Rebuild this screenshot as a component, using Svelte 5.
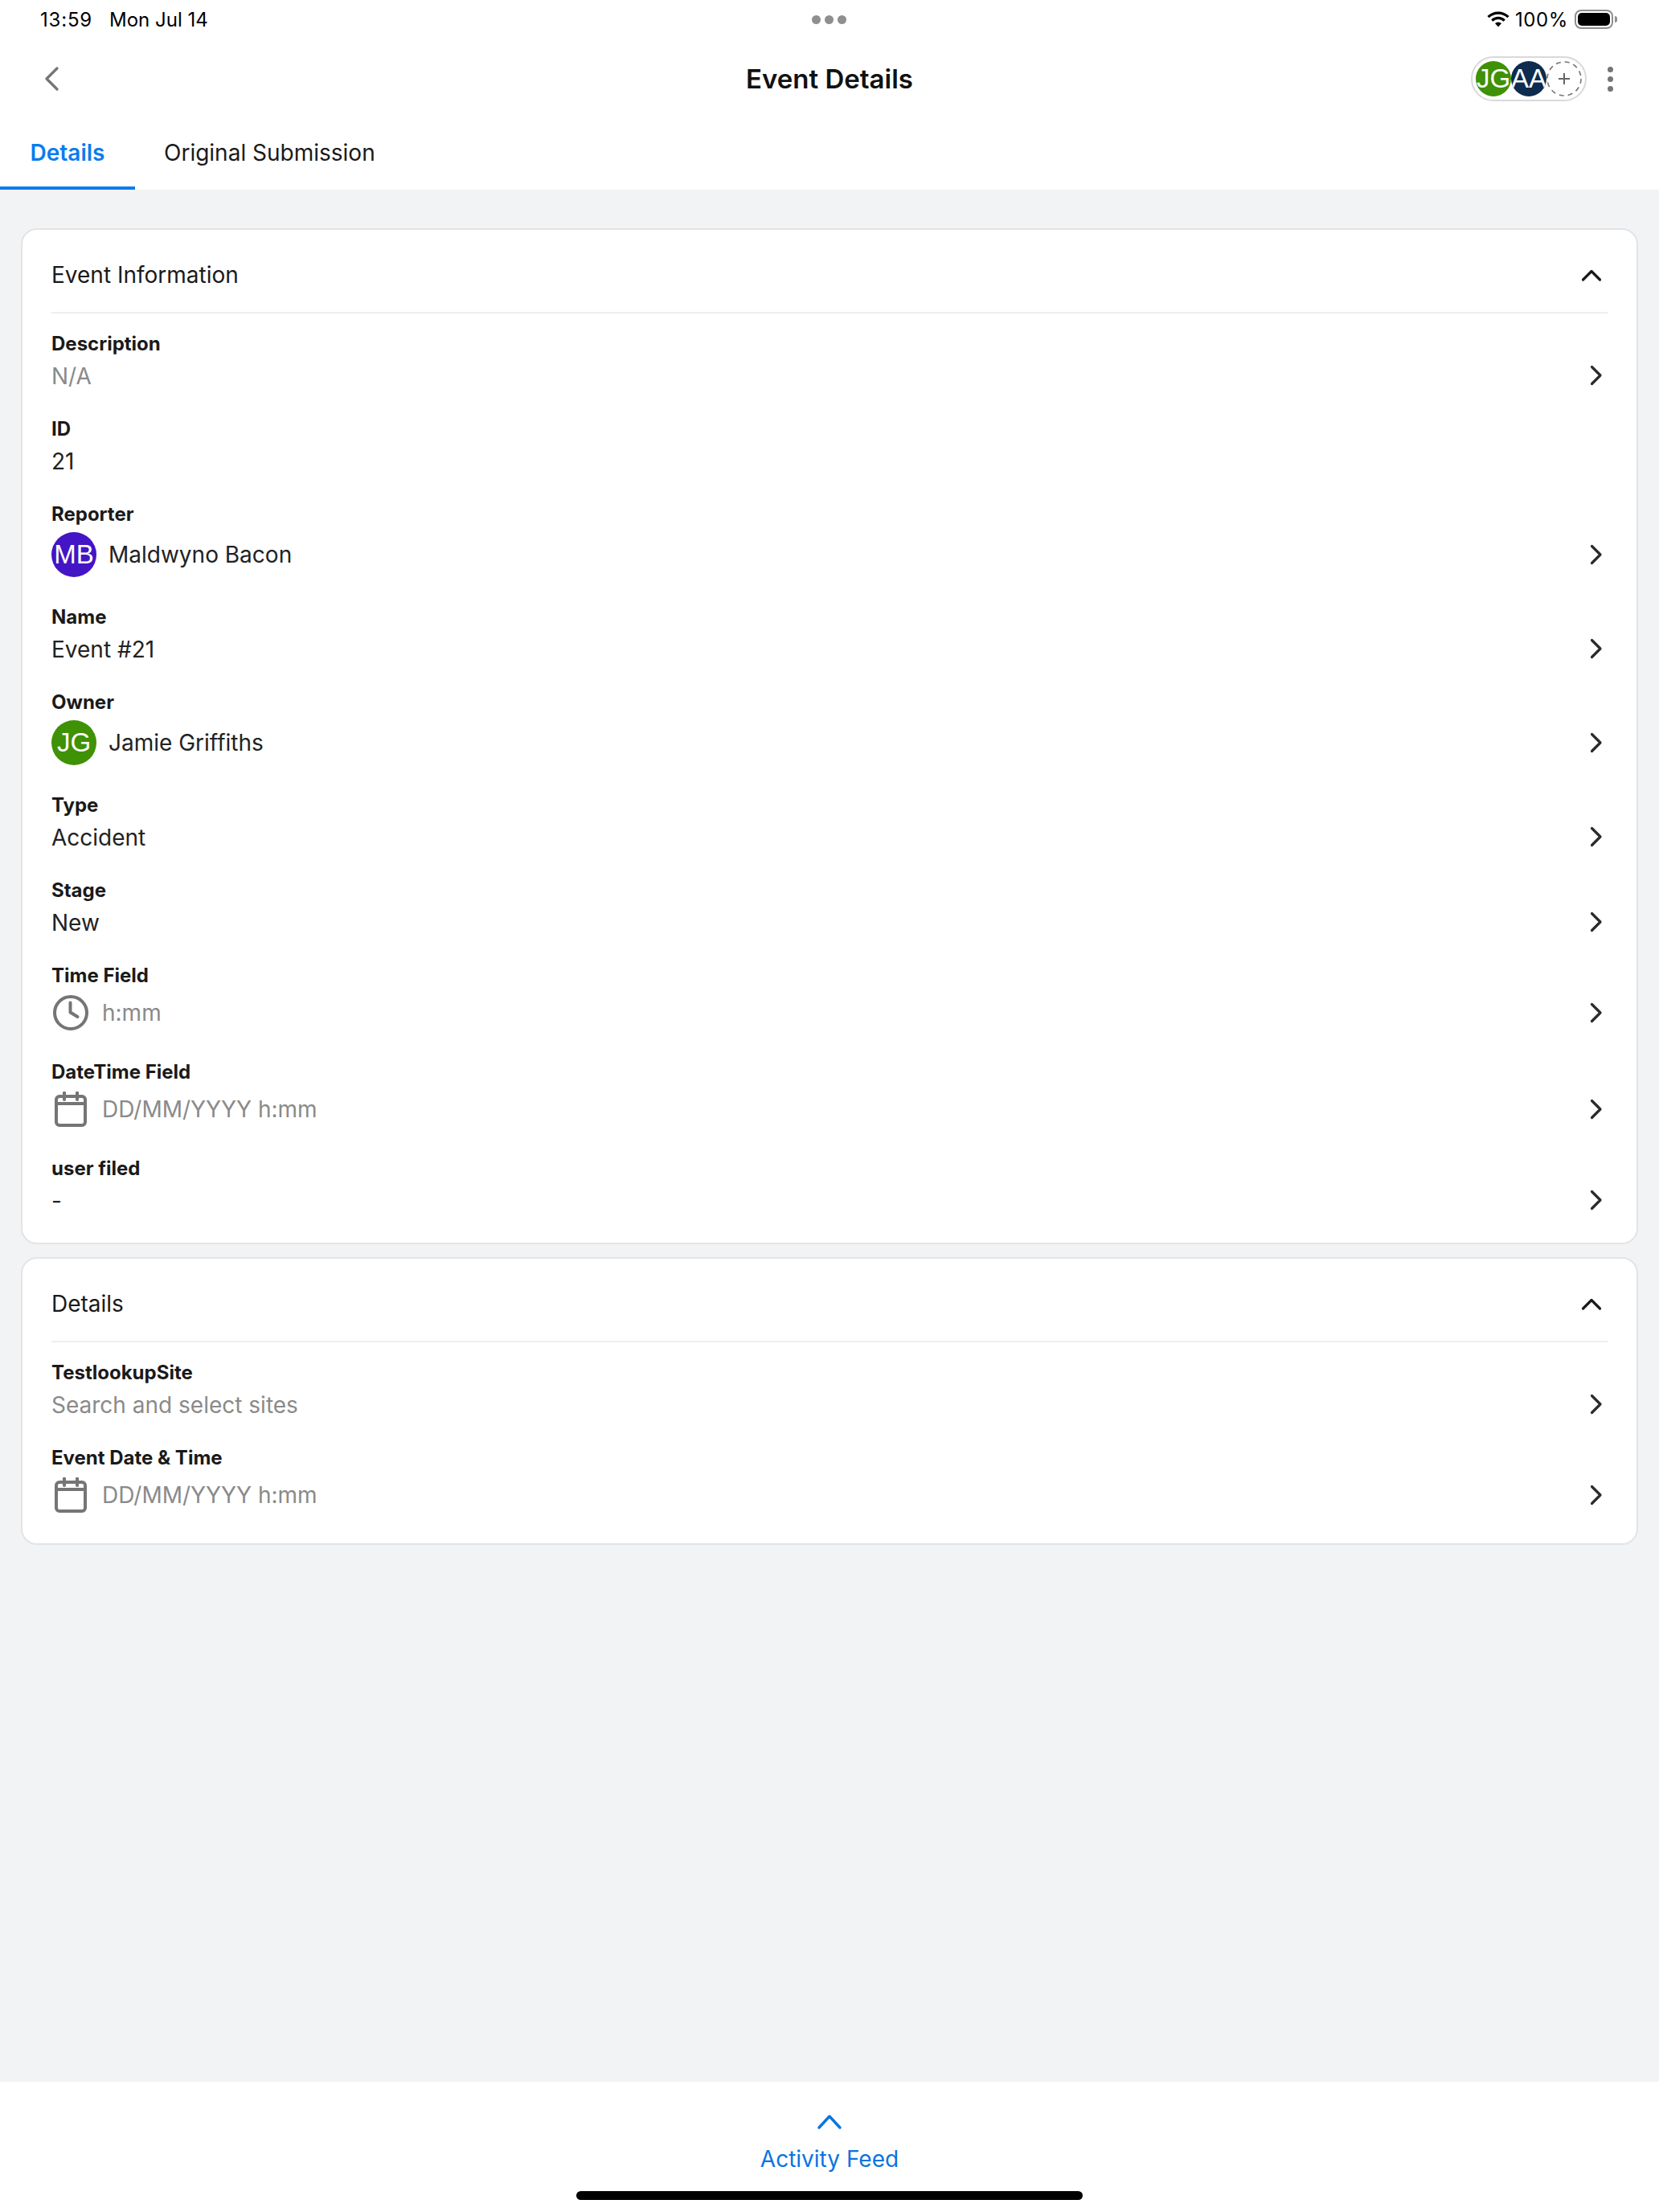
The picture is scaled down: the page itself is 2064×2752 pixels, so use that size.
<script>
  const infoRows = [
    { label: 'Description', value: 'N/A', muted: true, link: true },
    { label: 'ID', value: '21' },
    { label: 'Reporter', value: 'Maldwyno Bacon', initials: 'MB', color: '#4315c4', link: true },
    { label: 'Name', value: 'Event #21', link: true },
    { label: 'Owner', value: 'Jamie Griffiths', initials: 'JG', color: '#3f9106', link: true },
    { label: 'Type', value: 'Accident', link: true },
    { label: 'Stage', value: 'New', link: true },
    { label: 'Time Field', value: 'h:mm', muted: true, icon: 'clock', link: true },
    { label: 'DateTime Field', value: 'DD/MM/YYYY h:mm', muted: true, icon: 'calendar', link: true },
    { label: 'user filed', value: '-', link: true }
  ];

  const detailRows = [
    { label: 'TestlookupSite', value: 'Search and select sites', muted: true, link: true },
    { label: 'Event Date & Time', value: 'DD/MM/YYYY h:mm', muted: true, icon: 'calendar', link: true }
  ];

  const sections = [
    { title: 'Event Information', rows: infoRows },
    { title: 'Details', rows: detailRows }
  ];
</script>

<div class="page">
  <div class="status-bar">
    <div class="status-left">
      <span class="time">13:59</span>
      <span>Mon Jul 14</span>
    </div>
    <div class="status-dots"><i></i><i></i><i></i></div>
    <div class="status-right">
      <svg class="wifi" width="28" height="20" viewBox="0 0 28 20">
        <path d="M1.5 7.2a17.8 17.8 0 0 1 25 0" fill="none" stroke="#000" stroke-width="3.2" />
        <path d="M6.3 11.6a11 11 0 0 1 15.4 0" fill="none" stroke="#000" stroke-width="3.2" />
        <path d="M10 15a6 6 0 0 1 8 0l-4 4.6z" fill="#000" />
      </svg>
      <span>100%</span>
      <div class="battery"><div class="battery-fill"></div></div>
      <div class="battery-cap"></div>
    </div>
  </div>

  <header class="top-bar">
    <button class="back" aria-label="Back">
      <svg width="18" height="30" viewBox="0 0 18 30">
        <path d="M16 2 L3 15 L16 28" fill="none" stroke="#757575" stroke-width="3.2" stroke-linecap="round" stroke-linejoin="round" />
      </svg>
    </button>
    <h1>Event Details</h1>
    <div class="top-actions">
      <div class="pill">
        <span class="avatar small" style="background: #3f9106;">JG</span>
        <span class="avatar small" style="background: #0d2c4f;">AA</span>
        <span class="add">
          <svg width="44" height="44" viewBox="0 0 44 44">
            <circle cx="22" cy="22" r="21" fill="#fff" stroke="#757575" stroke-width="1.6" stroke-dasharray="6 5" />
            <path d="M22 15V29M15 22H29" stroke="#666" stroke-width="2" fill="none" />
          </svg>
        </span>
      </div>
      <div class="more"><i></i><i></i><i></i></div>
    </div>
  </header>

  <nav class="tabs">
    <span class="tab active">Details</span>
    <span class="tab">Original Submission</span>
  </nav>

  <main class="content">
    {#each sections as section}
      <section class="card">
        <div class="card-header">
          <span class="card-title">{section.title}</span>
          <svg width="40" height="40" viewBox="0 0 40 40">
            <path d="M9.5 26 L20 15.5 L30.5 26" fill="none" stroke="#1a1a1a" stroke-width="3.2" stroke-linecap="round" stroke-linejoin="round" />
          </svg>
        </div>
        <div class="rows">
          {#each section.rows as row}
            <div class="row">
              <div class="label">{row.label}</div>
              <div class="value" class:with-avatar={row.initials} class:with-icon={row.icon}>
                {#if row.initials}
                  <span class="avatar" style="background: {row.color};">{row.initials}</span>
                {/if}
                {#if row.icon === 'clock'}
                  <svg class="field-icon" width="44" height="44" viewBox="0 0 44 44" fill="none" stroke="#757575" stroke-width="4">
                    <circle cx="22" cy="22" r="20" />
                    <path d="M21.5 9.5V21.5L30.5 27" stroke-linecap="round" stroke-linejoin="round" />
                  </svg>
                {:else if row.icon === 'calendar'}
                  <svg class="field-icon" width="44" height="44" viewBox="0 0 44 44" fill="none" stroke="#757575" stroke-width="4">
                    <rect x="4" y="6" width="36" height="36" rx="4" />
                    <path d="M4 15H40" />
                    <path d="M14 1.5V10M30 1.5V10" stroke-linecap="round" />
                  </svg>
                {/if}
                <span class="value-text" class:muted={row.muted}>{row.value}</span>
                {#if row.link}
                  <svg class="chevron" width="28" height="28" viewBox="0 0 28 28">
                    <path d="M8.5 3.5 L19 14 L8.5 24.5" fill="none" stroke="#2b2b2b" stroke-width="3.2" stroke-linecap="round" stroke-linejoin="round" />
                  </svg>
                {/if}
              </div>
            </div>
          {/each}
        </div>
      </section>
    {/each}
  </main>

  <footer class="feed">
    <svg width="32" height="20" viewBox="0 0 32 20">
      <path d="M3 17 L16 3 L29 17" fill="none" stroke="#0a74e0" stroke-width="3.4" stroke-linecap="round" stroke-linejoin="round" />
    </svg>
    <span>Activity Feed</span>
    <div class="home-bar"></div>
  </footer>
</div>

<style>
  :global(body) {
    margin: 0;
    background: #f2f3f5;
  }

  .page {
    width: 2064px;
    height: 2752px;
    display: flex;
    flex-direction: column;
    font-family: Inter, "Liberation Sans", sans-serif;
    color: #1a1a1a;
    background: #f2f3f5;
  }

  .status-bar {
    height: 48px;
    padding: 0 52px 0 50px;
    display: grid;
    grid-template-columns: 1fr auto 1fr;
    align-items: center;
    background: #fff;
    font-size: 24px;
    color: #000;
  }

  .status-left {
    display: flex;
    gap: 21px;
  }

  .time {
    letter-spacing: 0.8px;
  }

  .status-dots {
    display: flex;
    gap: 5px;
  }

  .status-dots i {
    width: 11px;
    height: 11px;
    border-radius: 50%;
    background: #8f8f8f;
  }

  .status-right {
    display: flex;
    justify-content: flex-end;
    align-items: center;
    gap: 8px;
  }

  .status-right span {
    letter-spacing: 0.6px;
  }

  .wifi {
    margin-right: -1px;
  }

  .battery {
    width: 48px;
    height: 24px;
    box-sizing: border-box;
    border: 2px solid #8e8e8e;
    border-radius: 8px;
    padding: 2px;
  }

  .battery-fill {
    height: 100%;
    background: #000;
    border-radius: 5px;
  }

  .battery-cap {
    width: 3px;
    height: 8px;
    margin-left: -6px;
    background: #8e8e8e;
    border-radius: 0 3px 3px 0;
  }

  .top-bar {
    height: 100px;
    display: grid;
    grid-template-columns: 1fr auto 1fr;
    align-items: center;
    background: #fff;
  }

  .back {
    border: 0;
    padding: 0;
    margin-left: 55px;
    background: none;
    display: flex;
    justify-self: start;
  }

  h1 {
    margin: 0;
    font-size: 33px;
    font-weight: 600;
    color: #111;
  }

  .top-actions {
    display: flex;
    justify-content: flex-end;
    align-items: center;
    padding-right: 57px;
    gap: 26px;
  }

  .pill {
    display: flex;
    align-items: center;
    box-sizing: border-box;
    height: 56px;
    padding: 0 4px;
    border: 2px solid #d9d9d9;
    border-radius: 28px;
  }

  .avatar {
    flex: none;
    width: 56px;
    height: 56px;
    border-radius: 50%;
    display: flex;
    align-items: center;
    justify-content: center;
    color: #fff;
    font-family: "Liberation Sans", sans-serif;
    font-size: 33px;
    white-space: nowrap;
    overflow: hidden;
  }

  .avatar.small {
    width: 44px;
    height: 44px;
  }

  .add {
    display: flex;
  }

  .more {
    display: flex;
    flex-direction: column;
    gap: 5px;
  }

  .more i {
    width: 7px;
    height: 7px;
    border-radius: 50%;
    background: #757575;
  }

  .tabs {
    height: 88px;
    display: flex;
    background: #fff;
  }

  .tab {
    box-sizing: border-box;
    height: 88px;
    padding: 0 36px 4px;
    display: flex;
    align-items: center;
    font-size: 28px;
    color: #1a1a1a;
  }

  .tab.active {
    width: 168px;
    justify-content: center;
    padding: 0;
    color: #0a7cf0;
    font-weight: 600;
    border-bottom: 4px solid #0a7cf0;
  }

  .content {
    flex: 1;
    padding: 48px 26px 0 26px;
    display: flex;
    flex-direction: column;
    gap: 16px;
  }

  .card {
    background: #fff;
    border: 2px solid #e3e4e6;
    border-radius: 20px;
    padding: 0 36px 18px;
  }

  .card-header {
    height: 92px;
    padding-top: 10px;
    display: flex;
    align-items: center;
    justify-content: space-between;
    border-bottom: 2px solid #eeeeee;
    font-size: 28px;
  }

  .rows {
    padding-top: 6px;
  }

  .row {
    padding: 13px 0;
  }

  .label {
    height: 36px;
    line-height: 38px;
    font-size: 24px;
    font-weight: 700;
  }

  .value {
    min-height: 44px;
    display: flex;
    align-items: center;
    font-size: 28px;
    line-height: 42px;
    color: #222;
  }

  .value.with-avatar {
    min-height: 66px;
    gap: 15px;
  }

  .value.with-icon {
    min-height: 58px;
    gap: 17px;
  }

  .value-text {
    margin-top: 2px;
  }

  .with-avatar .value-text,
  .with-icon .value-text {
    margin-top: 0;
  }

  .field-icon {
    margin-left: 2px;
  }

  .muted {
    color: #8a8a8a;
  }

  .chevron {
    margin-left: auto;
  }

  .feed {
    height: 162px;
    background: #fff;
    position: relative;
    display: flex;
    flex-direction: column;
    align-items: center;
    box-sizing: border-box;
    padding-top: 40px;
    font-size: 28px;
    color: #0a74e0;
  }

  .feed span {
    margin-top: 16px;
    line-height: 40px;
  }

  .home-bar {
    position: absolute;
    left: 717px;
    top: 136px;
    width: 630px;
    height: 11px;
    border-radius: 6px;
    background: #000;
  }
</style>
